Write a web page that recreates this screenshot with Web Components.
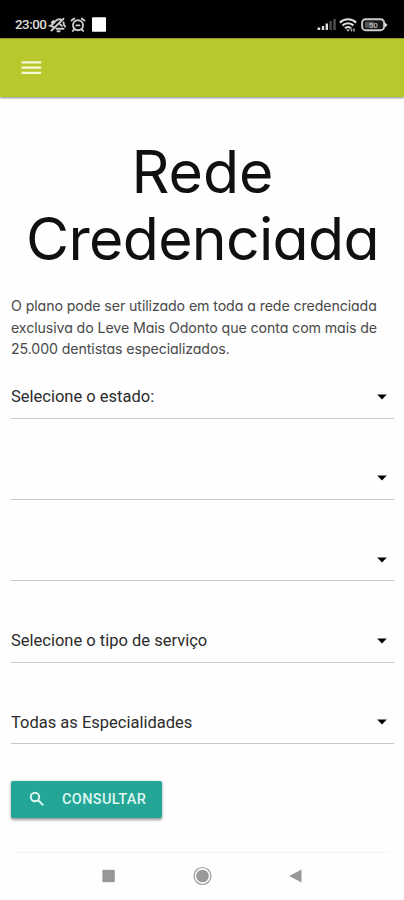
<!DOCTYPE html>
<html lang="pt-BR">
<head>
<meta charset="utf-8">
<meta name="viewport" content="width=device-width">
<title>Rede Credenciada</title>
<style>
html,body{margin:0;background:#fefefe}
body{width:404px;height:900px;overflow:hidden;font-family:Roboto,"Liberation Sans",sans-serif}
</style>
</head>
<body>
<rede-app></rede-app>
<script>
function define(name, html, setup) {
  customElements.define(name, class extends HTMLElement {
    connectedCallback() {
      if (this.shadowRoot) return;
      const t = document.createElement('template');
      t.innerHTML = html;
      this.attachShadow({ mode: 'open' }).append(t.content.cloneNode(true));
      if (setup) setup(this);
    }
  });
}

define('status-bar', `
<style>
:host{display:flex;height:38px;background:#000;color:#ddd;box-sizing:border-box;padding:11px 16px 0 15px;justify-content:space-between}
div{display:flex;height:27px;align-items:center}
.time{font:500 13.4px/27px Roboto,sans-serif;letter-spacing:-.5px;width:34px;white-space:nowrap}
svg{display:block}
</style>
<div>
  <span class="time">23:00</span>
  <svg width="20" height="20" viewBox="0 0 20 20" fill="none" stroke="#ccc" stroke-width="1.900" stroke-linecap="round" style="margin-left:-1px">
    <path d="M3.500 15.500 15.500 3.800M6.300 12.300c-1.300-.8-3-.5-4.300-1.500 2.500-.6 3.500-2.300 5-4.200C8.800 4.400 11 3.800 13 4.600M15.500 7.500c.4 1.500 0 2.500 1.500 4M8.500 13.800h7M9.500 16.200h2.200M12 9.300l1.800 1.500M3.800 7.500l1.700-1.500"/>
  </svg>
  <svg width="16" height="18" viewBox="0 0 16 18" fill="none" stroke="#ccc" stroke-width="1.900" stroke-linecap="round" style="margin-left:2px">
    <circle cx="8" cy="9.200" r="5"/><path d="M1.500 4.500 4.200 2.600M14.500 4.500 11.800 2.600M4 13.800l-1.200 1.100M12 13.800l1.200 1.100M6.300 9.400h3.200"/>
  </svg>
  <svg width="14" height="15" viewBox="0 0 14 15" style="margin-left:6px"><rect width="14" height="14.500" y=".2" rx=".8" fill="#fff"/></svg>
</div>
<div>
  <svg width="20" height="14" viewBox="0 0 20 14">
    <g fill="#ddd"><rect x=".5" y="9.500" width="2.700" height="2.500"/><rect x="4.800" y="8" width="2.400" height="4"/><rect x="8.600" y="5.500" width="2.400" height="6.500"/></g>
    <g fill="#4d4d4d"><rect x="12.400" y="3" width="2.400" height="9"/><rect x="16.200" y="1" width="2.600" height="11"/></g>
  </svg>
  <svg width="18" height="16" viewBox="0 0 18 16" fill="none" stroke="#ddd" stroke-width="2.200" style="margin-left:2px">
    <path d="M.9 5.600a11.500 11.500 0 0 1 16.200 0M3.500 8.500a7.800 7.800 0 0 1 11 0M6 11.300a4.300 4.300 0 0 1 6 0"/><path d="m9 14.500-1.900-2h3.800z" fill="#ddd" stroke="none"/><path d="M12.500 11.500v3m2.500-3v3" stroke="#aaa" stroke-width="1.500"/>
  </svg>
  <svg width="27" height="14" viewBox="0 0 27 14" style="margin-left:4px">
    <rect x="1.100" y="1.200" width="22" height="11" rx="3.500" fill="#151515" stroke="#ccc" stroke-width="1.900"/><rect x="4" y="3.700" width="9" height="6" rx="1" fill="#555"/><path d="M24 4.500 26.500 7 24 9.500z" fill="#ddd"/>
    <text x="12.200" y="9.700" font-family="Roboto,sans-serif" font-size="8" font-weight="500" text-anchor="middle" fill="#bbb">50</text>
  </svg>
</div>`);

define('app-bar', `
<style>
:host{display:flex;align-items:center;height:59px;box-sizing:border-box;padding:0 21px;background:#b7c72c;border-top:1px solid #8f9a2b;box-shadow:0 1px 2px #0007}
svg{display:block}
</style>
<svg width="21" height="16" viewBox="0 0 21 16" fill="#f5f8d6"><path d="M.5 1.200h19.700v2.300H.5zM.5 6.500h19.700v2.300H.5zM.5 11.800h19.700v2.300H.5z"/></svg>`);

define('page-title', `
<style>
:host{display:block;text-align:center}
h1{margin:0;font:440 59px/67px Inter,"Noto Sans",sans-serif;font-feature-settings:"cv11";color:#101010}
span{display:block;white-space:nowrap}
.a{letter-spacing:0}.b{letter-spacing:-.7px}
</style>
<h1><span class="a">Rede</span><span class="b">Credenciada</span></h1>`);

define('intro-text', `
<style>
:host{display:block}
p{margin:0;font:400 14.200px/21.500px Inter,"Noto Sans",sans-serif;font-feature-settings:"cv11";letter-spacing:-.1px;color:#4a4a4a}
span{display:block;white-space:nowrap}
</style>
<p><span>O plano pode ser utilizado em toda a rede credenciada </span><span>exclusiva do Leve Mais Odonto que conta com mais de </span><span>25.000 dentistas especializados.</span></p>`);

define('select-field', `
<style>
:host{display:flex;box-sizing:border-box;height:43.500px;border-bottom:1px solid #c8c8c8;align-items:center;justify-content:space-between;padding:1px 7px 0 0;font-size:16.500px;color:#2b2b2b;white-space:nowrap}
svg{display:block}
</style>
<span><slot></slot></span>
<svg width="10" height="6" viewBox="0 0 10 6"><path d="M.2.500h9.600L5 5.500z" fill="#000"/></svg>`);

define('action-button', `
<style>
:host{display:flex;box-sizing:border-box;width:151px;height:37px;border-radius:2px;background:#24a697;box-shadow:0 1.500px 3px #0006;align-items:center;padding-left:18px;color:#dff6f1;font-size:14.500px;font-weight:500;letter-spacing:.35px}
svg{display:block;margin-right:17px}
</style>
<svg width="16" height="16" viewBox="0 0 16 16" fill="none" stroke="#e2f7f3" stroke-width="1.900"><circle cx="6" cy="6" r="4.200"/><path d="m9 9 5.300 5.300"/></svg>
<span><slot></slot></span>`);

define('nav-bar', `
<style>
:host{display:grid;grid-template-columns:repeat(3,93.500px);justify-content:center;justify-items:center;align-items:center;height:48px;padding-bottom:1px;border-top:1px solid #f4f4f4;box-sizing:border-box}
svg{display:block}
</style>
<svg width="14" height="14"><rect x=".4" y=".8" width="12.400" height="12.400" fill="#979797"/></svg>
<svg width="20" height="20"><circle cx="10.500" cy="10" r="8.500" fill="none" stroke="#999" stroke-width="1.200"/><circle cx="10.500" cy="10" r="6.300" fill="#999"/></svg>
<svg width="14" height="14"><path d="M.2 7 12.500.5v13z" fill="#979797"/></svg>`);

define('rede-app', `
<style>
:host{display:flex;flex-direction:column;height:900px}
main{flex:1;padding:41px 10px 0 11px;display:flex;flex-direction:column}
intro-text{margin-top:23px}
.fields{display:flex;flex-direction:column;gap:37.900px;margin-top:15.500px}
action-button{margin-top:36.500px}
nav-bar{margin:0 14px}
</style>
<status-bar></status-bar>
<app-bar></app-bar>
<main>
  <page-title></page-title>
  <intro-text></intro-text>
  <div class="fields">
    <select-field>Selecione o estado:</select-field>
    <select-field></select-field>
    <select-field></select-field>
    <select-field>Selecione o tipo de serviço</select-field>
    <select-field>Todas as Especialidades</select-field>
  </div>
  <action-button>CONSULTAR</action-button>
</main>
<nav-bar></nav-bar>`);
</script>
</body>
</html>
